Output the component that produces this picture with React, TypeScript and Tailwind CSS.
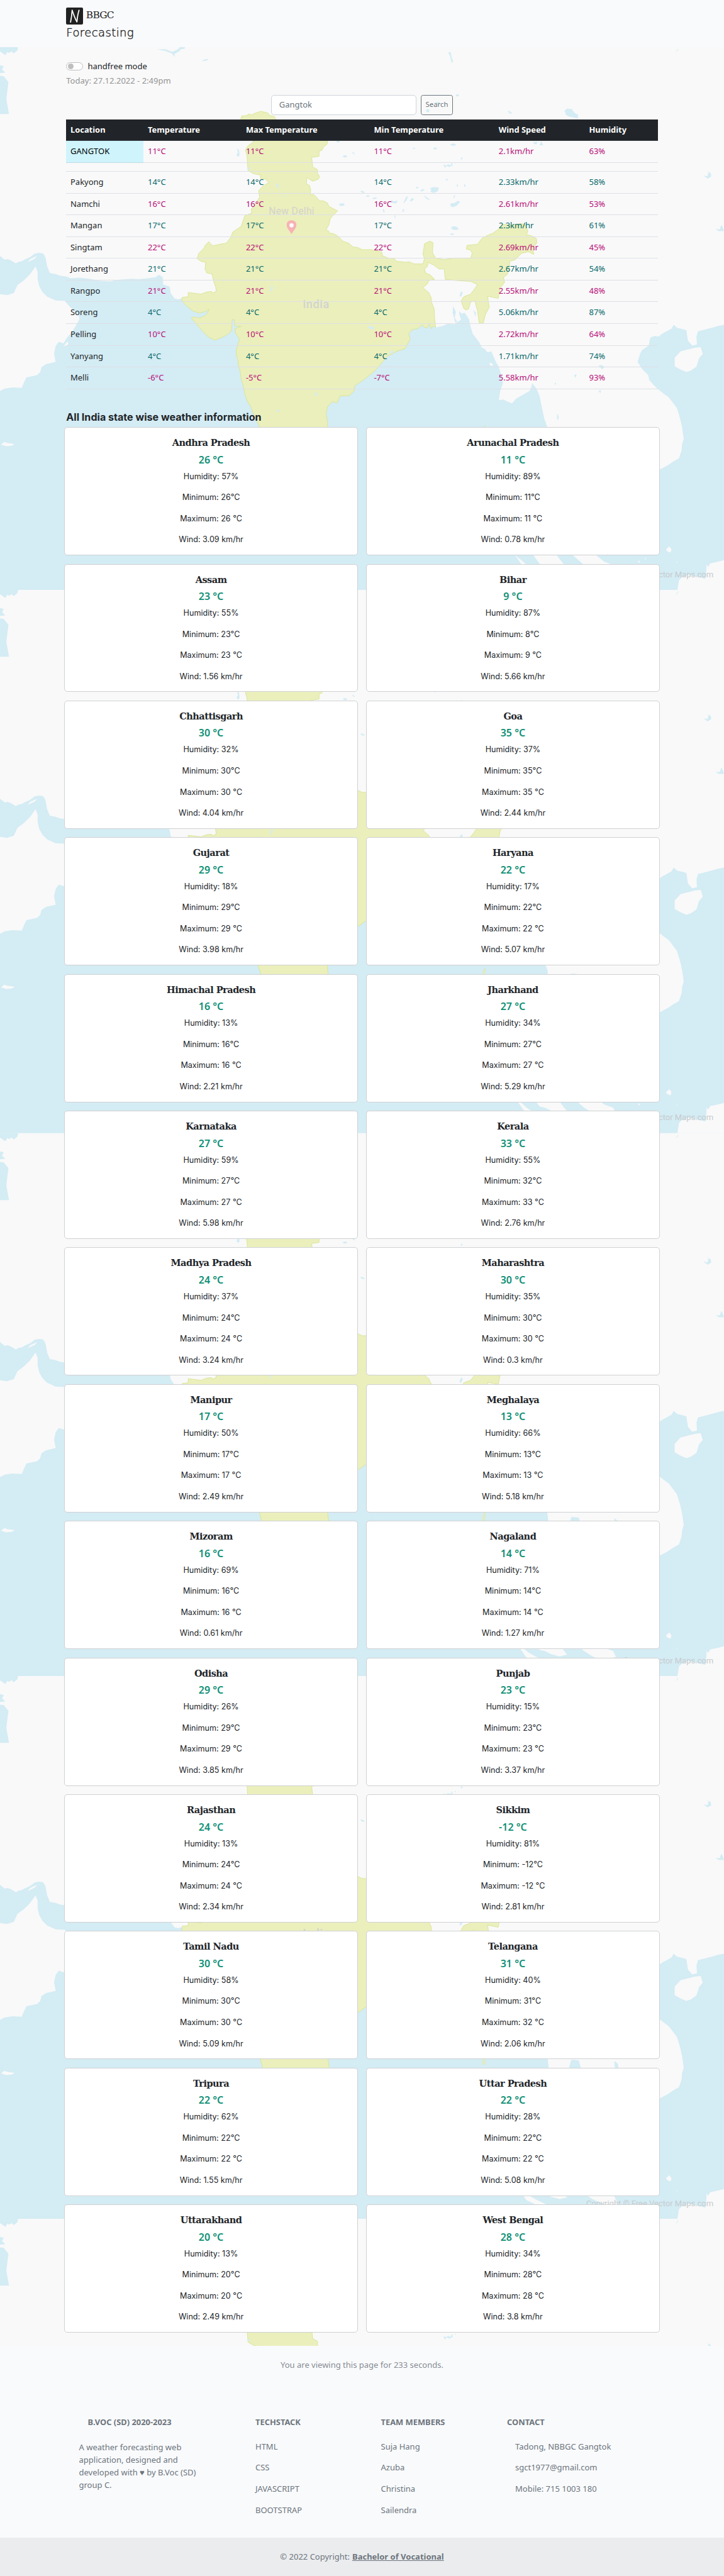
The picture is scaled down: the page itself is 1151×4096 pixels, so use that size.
import React from "react";

type Blob = [number, number, number, number, number?];

const WATER =
  "M0,483L9,490L14,489L20,491L30,497L35,494L41,493L48,489L57,485L65,479L73,477L81,478L84,482L86,487L89,503L94,515L105,517L113,520L126,522L133,525L150,524L168,526L180,528L187,530L209,531L222,528L235,527L250,526L261,527L279,525L294,523L297,520L301,519L307,523L308,537L320,541L322,553L329,563L336,565L342,563L400,560L600,610L700,600L795,600L822,618L835,615L845,611L857,612L870,603L867,595L866,587L871,592L877,590L885,603L888,617L892,630L898,638L905,647L909,656L914,658L920,665L927,663L933,677L936,684L940,690L946,707L949,723L944,737L941,755L950,754L958,758L966,761L974,752L983,747L999,738L1003,729L1004,723L1012,733L1018,747L1022,767L1027,790L1033,807L1035,826L1040,900L1060,930L1073,830L1078,813L1092,814L1097,832L1120,880L1160,920L1245,886L1260,878L1270,871L1281,865L1286,850L1287,838L1290,828L1287,807L1284,793L1280,779L1277,770L1262,750L1250,741L1240,733L1232,725L1225,717L1223,708L1212,697L1203,683L1208,667L1212,660L1224,652L1227,637L1235,634L1243,635L1249,630L1258,625L1267,620L1271,613L1278,619L1284,620L1295,623L1298,643L1306,652L1315,650L1314,635L1317,625L1330,622L1345,618L1355,615L1366,613L1366,1114L0,1114L0,738L9,733L24,731L41,732L46,720L50,712L70,708L76,702L78,693L87,687L105,683L102,667L105,653L111,645L120,648L126,638L135,627L143,615L150,602L148,593L140,587L131,578L122,568L105,567L89,560L80,551L74,540L71,527L71,513L67,503L57,517L45,529L33,538L26,553L13,557L0,555Z";

const INDIA =
  "M454,226L456,219L465,218L470,215L475,217L480,214L492,210L505,213L510,218L518,220L521,227L560,245L618,266L617,272L610,278L607,284L602,285L602,295L588,297L590,315L599,320L599,327L603,333L601,338L590,342L579,335L578,347L584,350L586,357L586,368L592,367L597,372L603,379L610,379L618,383L620,389L637,398L627,408L623,413L621,423L615,434L620,436L623,441L627,440L637,445L647,455L658,459L666,466L675,467L683,471L700,471L712,474L720,475L722,483L733,487L744,488L748,493L766,495L772,494L781,498L798,498L801,488L798,480L801,460L811,455L817,458L816,477L822,487L838,490L857,487L888,487L891,478L888,472L880,470L881,463L901,461L909,450L918,445L930,440L944,430L949,423L962,425L970,424L984,422L992,425L996,437L993,443L1003,445L1012,450L1013,458L1005,468L1007,480L997,475L984,478L972,490L962,493L960,510L957,518L950,523L952,533L944,543L940,563L930,561L920,559L923,580L916,593L912,609L904,609L901,587L896,568L888,570L884,583L879,585L875,582L870,568L875,560L888,555L894,547L901,537L888,531L857,529L840,527L838,507L829,508L818,500L807,495L807,502L801,508L803,515L812,519L816,523L820,527L808,530L807,535L798,543L809,552L814,563L814,570L819,582L820,600L822,618L818,614L814,620L810,611L806,619L801,618L797,613L788,620L777,622L771,630L774,640L764,658L748,663L739,668L731,672L722,683L707,700L692,712L683,719L669,728L668,738L658,747L642,747L636,760L627,758L618,767L615,780L618,797L618,806L621,826L615,860L580,930L545,960L515,900L495,826L490,806L479,783L473,767L466,756L462,743L459,728L455,715L453,700L450,690L449,680L446,670L446,660L449,650L452,640L445,630L443,620L455,616L443,615L442,603L438,603L437,623L431,630L418,637L405,642L392,635L375,617L361,600L364,598L377,600L388,595L392,590L395,583L390,587L377,591L364,587L353,578L347,572L343,568L344,561L355,560L355,552L379,555L390,551L399,550L400,553L408,550L407,542L403,530L400,517L390,515L387,508L388,495L379,493L372,488L375,478L385,468L388,462L394,456L401,464L414,461L427,459L436,447L439,438L455,427L462,407L475,402L474,395L483,383L490,372L488,360L497,350L507,345L501,338L492,337L491,330L479,328L468,322L467,310L466,293L463,283L468,275L478,268L470,250Z";

const LAKES = [
  "M0,89L34,89L33,95L26,101L22,97L17,100L14,98L10,104L0,97Z",
  "M0,123L7,125L4,131L10,137L0,138Z",
  "M0,143L7,144L16,155L14,170L12,187L15,204L17,215L0,215Z",
  "M296,93L312,93L325,98L336,93L339,89L349,89L348,92L341,93L338,97L329,102L330,108L324,101L312,96Z",
  "M380,116L386,112L393,111L391,114Z",
  "M846,99L850,98L852,107L855,117L852,118L849,106Z",
  "M1065,209L1070,205L1079,206L1083,212L1091,217L1090,224L1083,222L1074,220L1068,217Z",
  "M1274,99L1280,91L1279,95Z",
  "M447,280L451,283L452,293L449,296L446,292L449,288Z",
  "M1006,268L1015,268L1012,272L1008,272ZM1021,266L1025,274L1018,274Z",
  "M836,311L842,312L846,310L850,312L853,306L854,312L848,315L842,313L840,317Z",
  "M1327,331L1335,333L1337,324L1332,322L1341,327L1342,333L1335,337Z",
  "M811,355L818,353L828,354L826,361L818,364L812,362L814,358Z",
  "M850,384L858,383L864,379L868,381L862,388L854,391L850,389Z",
  "M761,383L766,372L770,370L767,378L762,383Z",
  "M799,368L810,376L812,378L804,375Z",
  "M737,377L744,380L750,378L748,384L740,383Z",
  "M851,428L858,427L862,428L866,433L858,434L853,433Z",
  "M1350,432L1358,433L1361,424L1364,430L1366,436L1356,436Z",
  "M1129,690L1134,689L1141,692L1136,697Z",
  "M1083,708L1088,706L1086,713Z",
  "M1129,738L1134,736L1133,742Z",
  "M1051,780L1054,786L1053,793L1051,790Z",
  "M855,578L860,588L858,600L863,607L859,609L854,590ZM893,585L898,590L897,598Z",
  "M579,298L590,304L587,306Z",
  "M1159,815L1166,821L1167,829L1160,828Z",
];

const INNER_LAKES =
  "M520,345L526,350L526,355L522,352ZM531,366L539,371L538,372ZM513,537L515,544L508,553L511,545ZM593,742L599,741L597,749ZM520,776L529,772L526,777ZM693,616L704,616L706,620L700,622ZM467,315L472,318L468,321ZM735,664L742,661L742,665L735,668Z";

const ISLANDS = [
  "M1273,675L1284,663L1300,659L1312,656L1322,655L1326,668L1319,676L1314,692L1304,699L1295,702L1283,697L1273,691Z",
  "M2,839L8,834L15,836L28,838L22,841L12,842Z",
  "M1366,1057L1354,1060L1340,1063L1336,1070L1333,1065L1333,1073L1331,1092L1322,1090L1315,1088L1298,1085L1286,1090L1281,1095L1278,1114L1366,1114Z",
  "M972,1048L985,1058L996,1068L1010,1076L1030,1086L1060,1095L1040,1096L1010,1086L993,1078Z",
  "M1006,1047L1050,1047L1060,1060L1070,1073L1056,1076L1040,1072L1028,1066L1018,1064Z",
  "M1080,1047L1124,1047L1140,1060L1157,1066L1168,1090L1140,1086L1118,1076L1102,1066Z",
  "M1257,1036L1263,1031L1267,1037L1265,1043L1258,1040Z",
  "M57,489L70,483L66,488L52,495ZM121,652L127,644L129,648L126,653ZM924,684L930,687L929,691L924,689Z",
  "M1204,1057L1208,1060L1205,1062ZM1217,1052L1219,1054L1217,1057ZM1276,1062L1278,1059L1278,1062Z",
];

const PONDS: Blob[] = [
  [863, 180, 3, 2], [807, 209, 3, 3], [826, 194, 5, 1.4], [962, 212, 4, 1.5, 35],
  [855, 273, 5, 2], [821, 280, 3.5, 1.8], [781, 280, 2.5, 1], [871, 299, 1.5, 2],
  [843, 339, 2, 1.5], [787, 354, 2.5, 1.5], [797, 359, 4, 1.6, -20], [863, 350, 1.5, 2],
  [877, 350, 1.2, 3], [707, 374, 4, 1.5, -10], [694, 370, 3, 1.5], [684, 362, 4, 1.5, 20],
  [777, 377, 4, 2, -40], [857, 371, 1, 3], [724, 398, 1.3, 3.5, -20], [761, 397, 1.5, 3],
  [745, 409, 1, 3], [853, 442, 3.5, 1.4], [651, 295, 4, 2], [667, 289, 3, 1, 40],
  [638, 267, 3.5, 1.6], [645, 386, 5, 2.5], [870, 555, 2, 5, 20], [1048, 724, 1.2, 2],
  [859, 307, 1, 1],
];

function MapTile({ labels }: { labels: boolean }) {
  return (
    <svg className="block h-[863.25px] w-[1151px] shrink-0" viewBox="0 89 1366 1024.5" preserveAspectRatio="none">
      <rect x="0" y="89" width="1366" height="1025" fill="#f9f9f9" />
      <path d={WATER} fill="#d4ecf4" />
      <g fill="#f9f9f9">
        {ISLANDS.map((d) => (
          <path key={d} d={d} />
        ))}
      </g>
      <g fill="#d4ecf4">
        {LAKES.map((d) => (
          <path key={d} d={d} />
        ))}
      </g>
      <path d={INDIA} fill="#ebefbc" stroke="#d9e592" strokeWidth="1.1" strokeLinejoin="round" />
      <path d="M911,822L912,808L915,803L914,822Z" fill="#ebefbc" stroke="#d9e592" strokeWidth="0.8" />
      <g fill="#d4ecf4">
        <path d={INNER_LAKES} />
        {PONDS.map(([x, y, rx, ry, a = 0]) => (
          <ellipse key={`${x}-${y}`} cx={x} cy={y} rx={rx} ry={ry} transform={`rotate(${a} ${x} ${y})`} />
        ))}
      </g>
      {labels && (
        <g fontFamily="Roboto, sans-serif">
          <text x="507" y="405" fontSize="18.5" fill="#d3d3cd" textLength="86">New Delhi</text>
          <text x="571" y="582" fontSize="21.5" fontWeight="500" fill="#d3d3d0" textLength="50">India</text>
          <text x="1106" y="1090" fontSize="15.5" fill="#c6cbce" textLength="240">Copyright © Free Vector Maps.com</text>
        </g>
      )}
      <path d="M550,441.500L543,431.500C538.500,424 541,415.700 550,415.700C559,415.700 561.500,424 557,431.500Z" fill="#f8b2b4" />
      <circle cx="550" cy="425.300" r="3.900" fill="#fff" />
    </svg>
  );
}

type Row = [string, string, string, string, string, string];

const ROWS: Row[] = [
  ["Pakyong", "14°C", "14°C", "14°C", "2.33km/hr", "58%"],
  ["Namchi", "16°C", "16°C", "16°C", "2.61km/hr", "53%"],
  ["Mangan", "17°C", "17°C", "17°C", "2.3km/hr", "61%"],
  ["Singtam", "22°C", "22°C", "22°C", "2.69km/hr", "45%"],
  ["Jorethang", "21°C", "21°C", "21°C", "2.67km/hr", "54%"],
  ["Rangpo", "21°C", "21°C", "21°C", "2.55km/hr", "48%"],
  ["Soreng", "4°C", "4°C", "4°C", "5.06km/hr", "87%"],
  ["Pelling", "10°C", "10°C", "10°C", "2.72km/hr", "64%"],
  ["Yanyang", "4°C", "4°C", "4°C", "1.71km/hr", "74%"],
  ["Melli", "-6°C", "-5°C", "-7°C", "5.58km/hr", "93%"],
];

type State = [name: string, temp: number, hum: number, min: number, max: number, wind: string];

const STATES: State[] = [
  ["Andhra Pradesh", 26, 57, 26, 26, "3.09"],
  ["Arunachal Pradesh", 11, 89, 11, 11, "0.78"],
  ["Assam", 23, 55, 23, 23, "1.56"],
  ["Bihar", 9, 87, 8, 9, "5.66"],
  ["Chhattisgarh", 30, 32, 30, 30, "4.04"],
  ["Goa", 35, 37, 35, 35, "2.44"],
  ["Gujarat", 29, 18, 29, 29, "3.98"],
  ["Haryana", 22, 17, 22, 22, "5.07"],
  ["Himachal Pradesh", 16, 13, 16, 16, "2.21"],
  ["Jharkhand", 27, 34, 27, 27, "5.29"],
  ["Karnataka", 27, 59, 27, 27, "5.98"],
  ["Kerala", 33, 55, 32, 33, "2.76"],
  ["Madhya Pradesh", 24, 37, 24, 24, "3.24"],
  ["Maharashtra", 30, 35, 30, 30, "0.3"],
  ["Manipur", 17, 50, 17, 17, "2.49"],
  ["Meghalaya", 13, 66, 13, 13, "5.18"],
  ["Mizoram", 16, 69, 16, 16, "0.61"],
  ["Nagaland", 14, 71, 14, 14, "1.27"],
  ["Odisha", 29, 26, 29, 29, "3.85"],
  ["Punjab", 23, 15, 23, 23, "3.37"],
  ["Rajasthan", 24, 13, 24, 24, "2.34"],
  ["Sikkim", -12, 81, -12, -12, "2.81"],
  ["Tamil Nadu", 30, 58, 30, 30, "5.09"],
  ["Telangana", 31, 40, 31, 32, "2.06"],
  ["Tripura", 22, 62, 22, 22, "1.55"],
  ["Uttar Pradesh", 22, 28, 22, 22, "5.08"],
  ["Uttarakhand", 20, 13, 20, 20, "2.49"],
  ["West Bengal", 28, 34, 28, 28, "3.8"],
];

const GRID = "grid grid-cols-[123px_155.9px_203.5px_198.4px_143.7px_1fr]";

function Header() {
  return (
    <header className="h-[75px] shrink-0 bg-[#f9fafc] pl-[105.3px] pt-[11.8px]">
      <div className="flex items-center">
        <svg className="h-[27px] w-[27px]" viewBox="0 0 32 32">
          <rect width="32" height="32" rx="2.500" fill="#212121" />
          <path
            d="M8.500 27.500C10 20 11 12 11.500 5C14 12.500 17 21 20.500 27C21.200 19 22.500 11 24.500 5"
            fill="none"
            stroke="#fff"
            strokeWidth="2.100"
            strokeLinecap="round"
            strokeLinejoin="round"
          />
        </svg>
        <span className="relative -top-[1px] ml-[4.5px] font-['DejaVu_Serif'] text-[15.5px] leading-[20px] tracking-[-0.8px] text-[#222]">BBGC</span>
      </div>
      <div className="mt-px font-['DejaVu_Sans'] text-[18px] font-extralight leading-[24px] tracking-[0.4px] text-[#1c1c1c] [-webkit-text-stroke:0.4px_#1c1c1c]">
        Forecasting
      </div>
    </header>
  );
}

function SearchArea() {
  return (
    <div>
      <div className="flex h-[13.5px] items-center">
        <span className="flex h-[13.5px] w-[26.700px] items-center rounded-full border border-[#bfbfbf] bg-white pl-[2px]">
          <span className="h-[9px] w-[9px] rounded-full bg-[#bfbfbf]" />
        </span>
        <span className="ml-[7.5px] text-[13px] leading-[20px] text-[#212529]">handfree mode</span>
      </div>
      <div className="mt-[5.800px] text-[13px] leading-[20px] text-[#949494]">Today: 27.12.2022 - 2:49pm</div>
      <div className="mt-[13px] flex h-[32px] justify-center gap-[7.5px]">
        <div className="flex w-[230.5px] items-center rounded-[5px] border border-[#ced4da] bg-white px-[11.5px] text-[13px] text-[#6c757d]">Gangtok</div>
        <button className="flex w-[50.5px] items-center justify-center rounded-[3.5px] border border-[#6c757d] text-[11.3px] text-[#6c757d]">Search</button>
      </div>
    </div>
  );
}

function WeatherRow({ row, magenta, first }: { row: Row; magenta: boolean; first?: boolean }) {
  return (
    <div
      className={`${GRID} h-[34.55px] border-b border-[#dee0e6] text-[13px] ${magenta ? "text-[#b80d78]" : "text-[#06686a]"}`}
    >
      {row.map((cell, i) => (
        <div
          key={i}
          className={`flex items-center pl-[6.700px] ${
            i === 0 ? (first ? "border-b border-[#badce3] bg-[#cff4fc] text-black -mb-px" : "text-[#212529]") : ""
          }`}
        >
          {cell}
        </div>
      ))}
    </div>
  );
}

function WeatherTable() {
  return (
    <div className="mt-[7px] w-[940.5px]">
      <div className={`${GRID} h-[34.55px] border-b border-[#373b3e] bg-[#212529] text-[12.9px] font-bold text-white`}>
        {["Location", "Temperature", "Max Temperature", "Min Temperature", "Wind Speed", "Humidity"].map((h) => (
          <div key={h} className="flex items-center pl-[6.700px]">
            {h}
          </div>
        ))}
      </div>
      <WeatherRow row={["GANGTOK", "11°C", "11°C", "11°C", "2.1km/hr", "63%"]} magenta first />
      <div className="h-[14.2px] border-b border-[#dee0e6]" />
      {ROWS.map((row, i) => (
        <WeatherRow key={row[0]} row={row} magenta={i % 2 === 1} />
      ))}
    </div>
  );
}

function StateCard({ state }: { state: State }) {
  const [name, temp, hum, min, max, wind] = state;
  return (
    <div className="flex h-[203.9px] flex-col items-center rounded-[5px] border border-[#d0d1d3] bg-white pt-[11px] text-[#212529]">
      <h3 className="h-[26.5px] font-['DejaVu_Serif'] text-[14.5px] font-bold leading-[26px] tracking-[-0.5px]">{name}</h3>
      <div className="h-[26px] text-[16px] font-semibold leading-[26px] text-[#0f8f75]">{temp} °C</div>
      <div className="-mt-[3px] font-['Inter'] text-[12.6px] leading-[33.55px]">
        <p className="text-center">Humidity: {hum}%</p>
        <p className="text-center">Minimum: {min}°C</p>
        <p className="text-center">Maximum: {max} °C</p>
        <p className="text-center">Wind: {wind} km/hr</p>
      </div>
    </div>
  );
}

function FooterList({ title, items, indent }: { title: string; items: string[]; indent?: boolean }) {
  return (
    <div>
      <h6 className="text-[12.9px] font-bold leading-[20px]">{title}</h6>
      <ul className={`mt-[12.5px] text-[13px] leading-[33.7px] ${indent ? "pl-[13px]" : ""}`}>
        {items.map((t) => (
          <li key={t}>{t}</li>
        ))}
      </ul>
    </div>
  );
}

export default function App() {
  return (
    <div className="flex h-[4096px] w-[1151px] flex-col overflow-hidden bg-[#f9fafc] font-['Noto_Sans',sans-serif]">
      <Header />
      <main className="relative h-[3654.5px] shrink-0 overflow-hidden">
        <div className="absolute inset-0 flex flex-col overflow-hidden">
          {[0, 1, 2, 3, 4].map((i) => (
            <MapTile key={i} labels={i < 4} />
          ))}
        </div>
        <div className="relative px-[105.3px] pt-[23.6px]">
          <SearchArea />
          <WeatherTable />
          <h2 className="mt-[31px] h-[29.5px] font-['Inter'] text-[16.1px] font-bold leading-[26px] text-[#212529]">
            All India state wise weather information
          </h2>
          <div className="-mx-[2.900px] grid grid-cols-2 gap-[13.5px]">
            {STATES.map((s) => (
              <StateCard key={s[0]} state={s} />
            ))}
          </div>
        </div>
      </main>
      <footer className="flex grow flex-col text-[#6c757d]">
        <p className="mt-[20px] text-center text-[13px] leading-[20px] text-[#868c93]">You are viewing this page for 233 seconds.</p>
        <div className="mt-[71.5px] grid grid-cols-[280.5px_199.5px_200.5px_1fr] pl-[125.5px]">
          <div>
            <h6 className="pl-[14px] text-[12.9px] font-bold leading-[20px]">B.VOC (SD) 2020-2023</h6>
            <p className="mt-[19.500px] text-[13px] leading-[20.2px]">
              A weather forecasting web
              <br />
              application, designed and
              <br />
              developed with ♥ by B.Voc (SD)
              <br />
              group C.
            </p>
          </div>
          <FooterList title="TECHSTACK" items={["HTML", "CSS", "JAVASCRIPT", "BOOTSTRAP"]} />
          <FooterList title="TEAM MEMBERS" items={["Suja Hang", "Azuba", "Christina", "Sailendra"]} />
          <FooterList title="CONTACT" items={["Tadong, NBBGC Gangtok", "sgct1977@gmail.com", "Mobile: 715 1003 180"]} indent />
        </div>
        <div className="mt-auto flex h-[61px] items-center justify-center gap-1 bg-[#ebecee] text-[13px]">
          <span>© 2022 Copyright:</span>
          <a className="font-bold underline">Bachelor of Vocational</a>
        </div>
      </footer>
    </div>
  );
}
